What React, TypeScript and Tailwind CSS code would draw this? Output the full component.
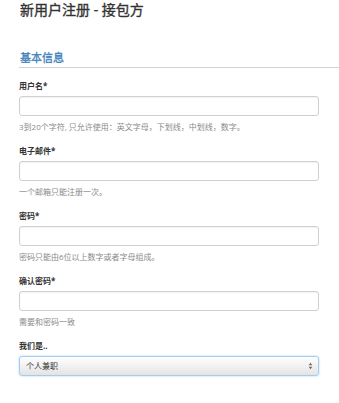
import React from "react";

const font = { fontFamily: '"Open Sans", "Noto Sans CJK SC", sans-serif' };

function Field({ label, help }: { label: string; help: string }) {
  return (
    <div className="mb-[12px]">
      <div className="text-[8px] leading-[12px] font-bold text-[#333] mb-[4px]">{label}</div>
      <div className="w-[300px] h-[20px] border border-[#d0d0d0] rounded-[3px] bg-white shadow-[inset_0_1px_1px_rgba(0,0,0,0.05)]" />
      <div className="text-[8px] leading-[12px] text-[#8a8a8a] mt-[5px]">{help}</div>
    </div>
  );
}

export default function App() {
  return (
    <div className="w-[339px] h-[403px] bg-white pl-[19px]" style={font}>
      <h1 className="text-[14px] leading-[20px] font-normal text-[#333] pl-[1px] [-webkit-text-stroke:0.35px_#333]">新用户注册 - 接包方</h1>
      <div className="mt-[30px] border-b border-[#d2d2d2] pb-[1px]">
        <div className="text-[11px] leading-[16px] font-normal text-[#3d80ba] pl-[1px] [-webkit-text-stroke:0.3px_#3d80ba]">基本信息</div>
      </div>
      <div className="pt-[12px]">
        <Field label="用户名*" help="3到20个字符, 只允许使用：英文字母，下划线，中划线，数字。" />
        <Field label="电子邮件*" help="一个邮箱只能注册一次。" />
        <Field label="密码*" help="密码只能由6位以上数字或者字母组成。" />
        <Field label="确认密码*" help="需要和密码一致" />
        <div>
          <div className="text-[8px] leading-[12px] font-bold text-[#333] mb-[4px]">我们是..</div>
          <div className="w-[300px] h-[20px] border border-[#a6cdee] rounded-[3px] bg-gradient-to-b from-white to-[#e4e4e4] shadow-[0_0_2px_rgba(100,170,230,0.6)] flex items-center justify-between pl-[6px] pr-[5px]">
            <span className="text-[8px] leading-[12px] text-[#333]">个人兼职</span>
            <svg width="5" height="8" viewBox="0 0 5 8">
              <path d="M2.5 0.8 L4.3 3.2 L0.7 3.2 Z" fill="#666" />
              <path d="M2.5 7.2 L4.3 4.8 L0.7 4.8 Z" fill="#666" />
            </svg>
          </div>
        </div>
      </div>
    </div>
  );
}
